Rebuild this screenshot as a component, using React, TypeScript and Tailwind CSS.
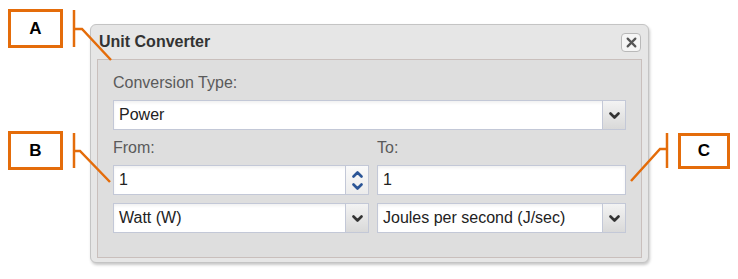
import React from 'react';

const ORANGE = '#e46c0a';

const Chevron = ({ up = false, color = '#333', w = 11, h = 7 }: { up?: boolean; color?: string; w?: number; h?: number }) => (
  <svg width={w} height={h} viewBox="0 0 11 7">
    <polyline
      points={up ? '1.5,5.5 5.5,1.5 9.5,5.5' : '1.5,1.5 5.5,5.5 9.5,1.5'}
      fill="none"
      stroke={color}
      strokeWidth="2.6"
      strokeLinecap="round"
      strokeLinejoin="round"
    />
  </svg>
);

const field =
  'flex h-[30px] overflow-hidden border border-[#c3c8d7] bg-white shadow-[inset_0_2px_3px_rgba(0,0,0,0.06)]';

const Select = ({ value }: { value: string }) => (
  <div className={field}>
    <div className="flex flex-1 items-center pl-[5px] text-[16px] text-[#222]">{value}</div>
    <div className="flex w-[23px] items-center justify-center border-l border-[#c3c8d7] bg-gradient-to-b from-[#f3f3f3] to-[#d9d9d9]">
      <Chevron />
    </div>
  </div>
);

const Callout = ({ letter, className }: { letter: string; className: string }) => (
  <div
    className={`absolute flex items-center justify-center border-[3px] border-[#e46c0a] bg-white text-[17px] font-bold text-black ${className}`}
  >
    {letter}
  </div>
);

export default function App() {
  return (
    <div
      className="relative h-[279px] w-[738px] overflow-hidden bg-white pl-[90px] pt-[24px]"
      style={{ fontFamily: '"Liberation Sans", Arial, sans-serif' }}
    >
      {/* dialog */}
      <div className="flex h-[239px] w-[559px] flex-col rounded-[6px] border border-[#c4c4c4] bg-[#e6e6e6] shadow-[1px_2px_3px_rgba(0,0,0,0.22)]">
        <div className="flex h-[34px] items-center justify-between pl-[8px] pr-[7px]">
          <span className="text-[16px] font-bold text-[#333]">Unit Converter</span>
          <div className="flex h-[19px] w-[20px] items-center justify-center rounded-[4px] border border-[#b9b9b9] bg-[#f5f5f5]">
            <svg width="11" height="11" viewBox="0 0 10 10">
              <path d="M1.5 1.5 L8.5 8.5 M8.5 1.5 L1.5 8.5" stroke="#555" strokeWidth="2" strokeLinecap="round" />
            </svg>
          </div>
        </div>
        <div className="mx-[6px] mb-[4px] flex-1 border border-[#c9bfbc] bg-[#dedede] px-[15px] pt-[13px]">
          <div className="mb-[7px] h-[20px] text-[16px] leading-[20px] text-[#5a5a5a]">Conversion Type:</div>
          <Select value="Power" />
          <div className="mt-[8px] grid grid-cols-[256px_249px] gap-x-[8px]">
            <div className="mb-[7px] h-[20px] text-[16px] leading-[20px] text-[#5a5a5a]">From:</div>
            <div className="mb-[7px] h-[20px] text-[16px] leading-[20px] text-[#5a5a5a]">To:</div>
            <div className={field}>
              <div className="flex flex-1 items-center pl-[5px] text-[16px] text-[#222]">1</div>
              <div className="flex w-[23px] flex-col items-center justify-center gap-[5px] border-l border-[#c3c8d7] bg-gradient-to-b from-[#fafafa] to-[#ececec]">
                <Chevron up color="#2b5596" w={11} h={7} />
                <Chevron color="#2b5596" w={11} h={7} />
              </div>
            </div>
            <div className={field}>
              <div className="flex flex-1 items-center pl-[5px] text-[16px] text-[#222]">1</div>
            </div>
            <div className="mt-[8px]">
              <Select value="Watt (W)" />
            </div>
            <div className="mt-[8px]">
              <Select value="Joules per second (J/sec)" />
            </div>
          </div>
        </div>
      </div>

      {/* callouts */}
      <svg className="pointer-events-none absolute left-0 top-0" width="738" height="279">
        <g fill="none" stroke={ORANGE} strokeWidth="2.5">
          <path d="M74 10 V47" />
          <path d="M74 29 H82 L111 60" />
          <path d="M74 133 V168" />
          <path d="M74 151 H80 L110 182" />
          <path d="M667 133 V168" />
          <path d="M667 149 H660 L631 181" />
        </g>
      </svg>
      <Callout letter="A" className="left-[8px] top-[9px] h-[39px] w-[55px]" />
      <Callout letter="B" className="left-[8px] top-[131px] h-[39px] w-[55px]" />
      <Callout letter="C" className="left-[678px] top-[133px] h-[36px] w-[52px]" />
    </div>
  );
}
